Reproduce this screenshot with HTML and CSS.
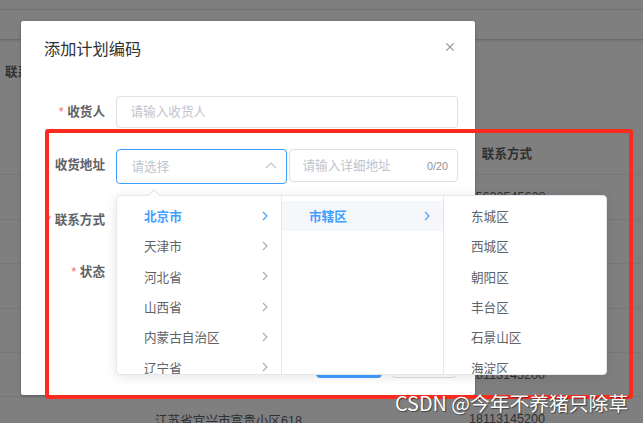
FILE: index.html
```html
<!DOCTYPE html>
<html lang="zh-CN">
<head>
<meta charset="utf-8">
<title>添加计划编码</title>
<link rel="stylesheet" href="styles.css">
</head>
<body>
<div class="page">
  <div class="tabs"><div class="tabs-top"></div><div class="tabs-bar"></div></div>
  <div class="search"><span class="search-label">联系方式</span></div>
  <div class="table">
    <div class="tr th"><div class="td"></div><div class="td">收货地址</div><div class="td"></div><div class="td">联系方式</div><div class="td"></div></div>
    <div class="tr"><div class="td"></div><div class="td">江苏省无锡市滨湖区太湖路</div><div class="td"></div><div class="td">15623545628</div><div class="td"></div></div>
    <div class="tr"><div class="td"></div><div class="td">江苏省苏州市姑苏区</div><div class="td"></div><div class="td">13812345678</div><div class="td"></div></div>
    <div class="tr"><div class="td"></div><div class="td">江苏省南京市鼓楼区</div><div class="td"></div><div class="td">13912345678</div><div class="td"></div></div>
    <div class="tr"><div class="td"></div><div class="td">江苏省常州市武进区</div><div class="td"></div><div class="td">15012345678</div><div class="td"></div></div>
    <div class="tr"><div class="td"></div><div class="td">江苏省宜兴市富贵小区618</div><div class="td"></div><div class="td">18113145200</div><div class="td"></div></div>
    <div class="tr"><div class="td"></div><div class="td">江苏省宜兴市富贵小区618</div><div class="td"></div><div class="td">18113145200</div><div class="td"></div></div>
  </div>
</div>

<div class="mask"></div>

<div class="dialog">
  <div class="dialog-header">
    <span class="dialog-title">添加计划编码</span>
    <button class="dialog-close" type="button" aria-label="关闭">
      <svg width="10" height="10" viewBox="0 0 10 10"><path d="M1.3 1.3L8.7 8.7M8.7 1.3L1.3 8.7" stroke="#909399" stroke-width="1.2" fill="none"/></svg>
    </button>
  </div>
  <div class="dialog-body">
    <form class="form">
      <div class="form-item">
        <label class="form-label required">收货人</label>
        <div class="form-content"><input class="input" placeholder="请输入收货人"></div>
      </div>
      <div class="form-item form-item-addr">
        <label class="form-label">收货地址</label>
        <div class="form-content">
          <div class="select">
            <input class="select-input" placeholder="请选择" readonly>
            <svg class="select-arrow" width="12" height="7" viewBox="0 0 12 7"><polyline points="1,6 6,1 11,6" stroke="#c0c4cc" stroke-width="1.1" fill="none"/></svg>
          </div>
          <div class="input-count">
            <input class="count-input" placeholder="请输入详细地址">
            <span class="count">0/20</span>
          </div>
        </div>
      </div>
      <div class="form-item">
        <label class="form-label required">联系方式</label>
        <div class="form-content"><input class="input" placeholder="请输入联系方式"></div>
      </div>
      <div class="form-item">
        <label class="form-label required">状态</label>
        <div class="form-content"><input class="input" placeholder="请选择状态"></div>
      </div>
    </form>
  </div>
  <div class="dialog-footer">
    <button class="btn btn-primary" type="button">确 定</button>
    <button class="btn" type="button">取 消</button>
  </div>
</div>

<div class="cascader">
  <span class="cascader-arrow"></span>
  <div class="menus">
    <ul class="menu menu-1">
      <li class="node active"><span>北京市</span><svg class="node-arrow" width="6" height="10" viewBox="0 0 6 10"><polyline points="1,1 5,5 1,9" stroke="#409eff" stroke-width="1.1" fill="none"/></svg></li>
      <li class="node"><span>天津市</span><svg class="node-arrow" width="6" height="10" viewBox="0 0 6 10"><polyline points="1,1 5,5 1,9" stroke="#a8abb2" stroke-width="1.1" fill="none"/></svg></li>
      <li class="node"><span>河北省</span><svg class="node-arrow" width="6" height="10" viewBox="0 0 6 10"><polyline points="1,1 5,5 1,9" stroke="#a8abb2" stroke-width="1.1" fill="none"/></svg></li>
      <li class="node"><span>山西省</span><svg class="node-arrow" width="6" height="10" viewBox="0 0 6 10"><polyline points="1,1 5,5 1,9" stroke="#a8abb2" stroke-width="1.1" fill="none"/></svg></li>
      <li class="node"><span>内蒙古自治区</span><svg class="node-arrow" width="6" height="10" viewBox="0 0 6 10"><polyline points="1,1 5,5 1,9" stroke="#a8abb2" stroke-width="1.1" fill="none"/></svg></li>
      <li class="node"><span>辽宁省</span><svg class="node-arrow" width="6" height="10" viewBox="0 0 6 10"><polyline points="1,1 5,5 1,9" stroke="#a8abb2" stroke-width="1.1" fill="none"/></svg></li>
    </ul>
    <ul class="menu menu-2">
      <li class="node active hover"><span>市辖区</span><svg class="node-arrow" width="6" height="10" viewBox="0 0 6 10"><polyline points="1,1 5,5 1,9" stroke="#409eff" stroke-width="1.1" fill="none"/></svg></li>
    </ul>
    <ul class="menu menu-3">
      <li class="node"><span>东城区</span></li>
      <li class="node"><span>西城区</span></li>
      <li class="node"><span>朝阳区</span></li>
      <li class="node"><span>丰台区</span></li>
      <li class="node"><span>石景山区</span></li>
      <li class="node"><span>海淀区</span></li>
    </ul>
  </div>
</div>

<div class="annotation"></div>
<div class="watermark">CSDN @今年不养猪只除草</div>
</body>
</html>
```

FILE: styles.css
```css
* {
  box-sizing: border-box;
  margin: 0;
  padding: 0;
}

html, body {
  width: 643px;
  height: 423px;
  overflow: hidden;
}

body {
  position: relative;
  font-family: "Liberation Sans", "Noto Sans CJK SC", sans-serif;
  font-size: 12.6px;
  color: #606266;
  background: #fff;
}

/* ---------- background page ---------- */
.page {
  width: 643px;
}

.tabs-top {
  height: 10px;
  border-bottom: 1px solid #e4e7ed;
}

.tabs-bar {
  height: 30px;
  border-bottom: 1px solid #d4d7de;
  box-shadow: 0 1px 3px rgba(0, 0, 0, 0.12);
}

.search {
  height: 91px;
  padding: 22px 0 0 5px;
}

.search-label {
  font-weight: 700;
  line-height: 20px;
  color: #606266;
}

.tr {
  display: grid;
  grid-template-columns: 82px 293px 65px 134px 1fr;
  align-items: center;
  height: 44.4px;
  border-bottom: 1px solid #ebeef5;
}

.td {
  text-align: center;
  white-space: nowrap;
  overflow: hidden;
  color: #606266;
}

.th .td {
  font-weight: 700;
}

.mask {
  position: absolute;
  inset: 0;
  background: rgba(0, 0, 0, 0.5);
}

/* ---------- dialog ---------- */
.dialog {
  position: absolute;
  left: 21px;
  top: 21px;
  width: 454px;
  height: 374px;
  background: #fff;
  border-radius: 2px;
  box-shadow: 0 1px 3px rgba(0, 0, 0, 0.3);
}

.dialog-header {
  position: relative;
  height: 39px;
  padding: 15px 23px 0;
}

.dialog-title {
  display: block;
  font-size: 16.2px;
  line-height: 24px;
  color: #303133;
  font-family: "Noto Sans CJK SC", sans-serif;
}

.dialog-close {
  position: absolute;
  left: 424px;
  top: 20.7px;
  width: 10px;
  height: 10px;
  border: 0;
  background: none;
  display: block;
}

.dialog-close svg {
  display: block;
}

.dialog-body {
  padding: 36px 17px 20px 23px;
}

.form-item {
  display: flex;
  height: 32px;
  margin-bottom: 20px;
}

.form-item:first-child {
  margin-bottom: 21px;
}

.form-item-addr {
  height: 35px;
}

.form-label {
  flex: none;
  width: 72px;
  padding-right: 11px;
  text-align: right;
  line-height: 32px;
  font-weight: 700;
  color: #606266;
  white-space: nowrap;
}

.form-label.required::before {
  content: "*";
  color: #f56c6c;
  margin-right: 3.6px;
  font-weight: 400;
}

.form-content {
  flex: 1;
  display: flex;
  align-items: flex-start;
  gap: 2px;
  min-width: 0;
}

input {
  font: inherit;
  color: #606266;
  outline: none;
  background: #fff;
}

input::placeholder {
  color: #c0c4cc;
}

.input {
  width: 100%;
  height: 32px;
  border: 1px solid #dcdfe6;
  border-radius: 4px;
  padding: 0 13.5px;
}

.select {
  flex: 1 1 0;
  min-width: 0;
  height: 35px;
  display: flex;
  align-items: center;
  border: 1px solid #409eff;
  border-radius: 4px;
  padding: 0 9px 0 14.5px;
}

.select-input {
  flex: 1 1 0;
  width: 0;
  min-width: 0;
  border: 0;
  height: 100%;
  background: transparent;
}

.select-arrow {
  flex: none;
  display: block;
  margin-top: -3px;
}

.input-count {
  flex: 1 1 0;
  min-width: 0;
  height: 33px;
  display: flex;
  align-items: center;
  border: 1px solid #dcdfe6;
  border-radius: 4px;
  padding: 0 9px 0 12.5px;
}

.count-input {
  flex: 1 1 0;
  width: 0;
  min-width: 0;
  border: 0;
  height: 100%;
  background: transparent;
}

.count {
  flex: none;
  font-size: 10.8px;
  color: #909399;
}

.dialog-footer {
  display: flex;
  justify-content: flex-end;
  gap: 9px;
  padding: 18px 18px 17px;
}

.btn {
  width: 66px;
  height: 32px;
  border: 1px solid #dcdfe6;
  border-radius: 4px;
  background: #fff;
  color: #606266;
  font: inherit;
}

.btn-primary {
  background: #409eff;
  border-color: #409eff;
  color: #fff;
}

/* ---------- cascader dropdown ---------- */
.cascader {
  position: absolute;
  left: 116px;
  top: 195px;
  width: 491px;
  height: 180px;
  background: #fff;
  border: 1px solid #e4e7ed;
  border-radius: 4px;
  box-shadow: 0 2px 12px rgba(0, 0, 0, 0.1);
}

.cascader-arrow {
  position: absolute;
  left: 32.5px;
  top: -5px;
  width: 8px;
  height: 8px;
  background: #fff;
  border-left: 1px solid #e4e7ed;
  border-top: 1px solid #e4e7ed;
  transform: rotate(45deg);
}

.menus {
  display: flex;
  height: 100%;
  overflow: hidden;
  border-radius: 4px;
}

.menu {
  list-style: none;
  height: 100%;
  overflow: hidden;
  padding-top: 5px;
  border-right: 1px solid #e4e7ed;
}

.menu-1 {
  width: 165px;
}

.menu-2 {
  width: 162px;
}

.menu-3 {
  flex: 1;
  border-right: 0;
}

.node {
  display: flex;
  align-items: center;
  justify-content: space-between;
  height: 30.3px;
  padding: 0 13px 1px 27px;
  color: #606266;
  white-space: nowrap;
}

.node.active {
  color: #409eff;
  font-weight: 700;
}

.node.hover {
  background: #f5f7fa;
}

.node-arrow {
  display: block;
  flex: none;
}

/* ---------- overlays ---------- */
.annotation {
  position: absolute;
  left: 45px;
  top: 129px;
  width: 588px;
  height: 270px;
  border: 4px solid #fd2a20;
  border-radius: 3px;
}

.watermark {
  position: absolute;
  left: 395px;
  top: 391px;
  font-family: "Noto Sans CJK SC", sans-serif;
  font-size: 19.8px;
  line-height: 24px;
  color: #fff;
  white-space: nowrap;
  text-shadow: 0 0 1px #444, 1px 1px 1px rgba(0, 0, 0, 0.45);
}
```
